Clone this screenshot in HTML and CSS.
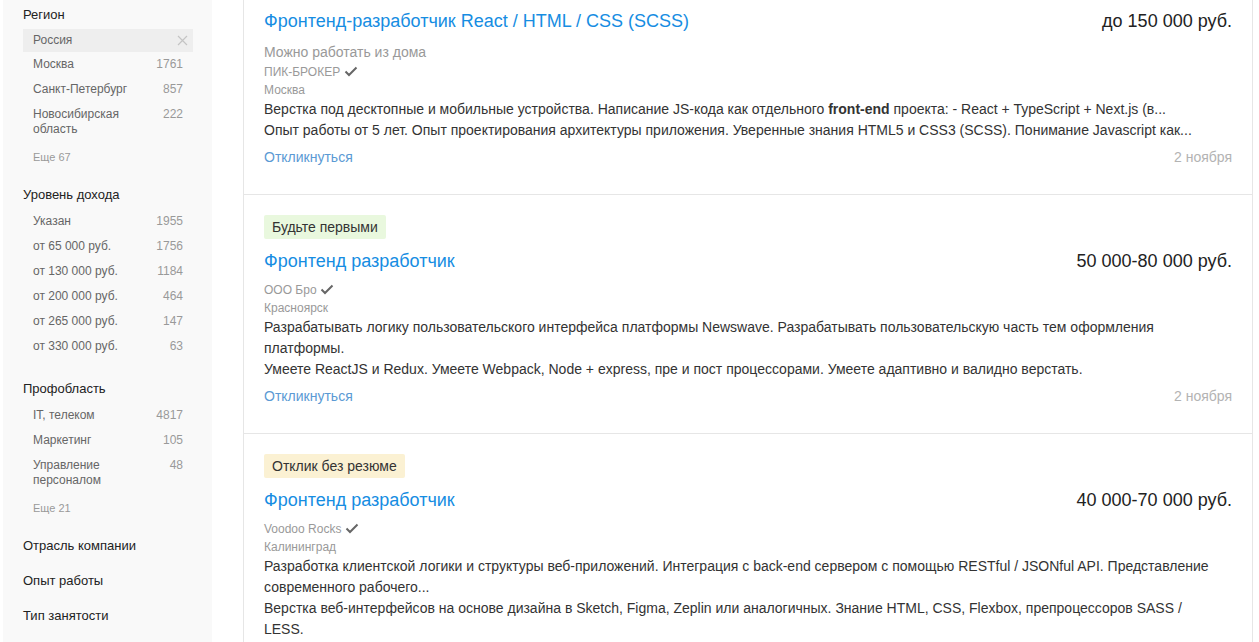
FILE: index.html
```html
<!DOCTYPE html>
<html lang="ru">
<head>
    <meta charset="UTF-8" />
    <meta name="viewport" content="width=device-width, initial-scale=1.0" />
    <title>Вакансии: фронтенд разработчик</title>
    <link rel="stylesheet" href="styles.css">
</head>
<body>
    <div class="page">
        <!-- Фильтры -->
        <aside class="filters">
            <div class="filter-group">
                <div class="filter-title">Регион</div>
                <div class="filter-item selected">
                    <span>Россия</span>
                    <svg class="clear" width="11" height="11" viewBox="0 0 11 11"><path d="M1 1L10 10M10 1L1 10" stroke="#c4c4c4" stroke-width="1.2" fill="none" /></svg>
                </div>
                <div class="filter-item"><span>Москва</span><span class="count">1761</span></div>
                <div class="filter-item"><span>Санкт-Петербург</span><span class="count">857</span></div>
                <div class="filter-item"><span>Новосибирская<br>область</span><span class="count">222</span></div>
                <a class="filter-more" href="#">Еще 67</a>
            </div>

            <div class="filter-group">
                <div class="filter-title">Уровень дохода</div>
                <div class="filter-item"><span>Указан</span><span class="count">1955</span></div>
                <div class="filter-item"><span>от 65 000 руб.</span><span class="count">1756</span></div>
                <div class="filter-item"><span>от 130 000 руб.</span><span class="count">1184</span></div>
                <div class="filter-item"><span>от 200 000 руб.</span><span class="count">464</span></div>
                <div class="filter-item"><span>от 265 000 руб.</span><span class="count">147</span></div>
                <div class="filter-item"><span>от 330 000 руб.</span><span class="count">63</span></div>
            </div>

            <div class="filter-group">
                <div class="filter-title">Профобласть</div>
                <div class="filter-item"><span>IT, телеком</span><span class="count">4817</span></div>
                <div class="filter-item"><span>Маркетинг</span><span class="count">105</span></div>
                <div class="filter-item"><span>Управление<br>персоналом</span><span class="count">48</span></div>
                <a class="filter-more" href="#">Еще 21</a>
            </div>

            <div class="filter-title collapsed">Отрасль компании</div>
            <div class="filter-title collapsed">Опыт работы</div>
            <div class="filter-title collapsed">Тип занятости</div>
        </aside>

        <!-- Список вакансий -->
        <main class="results">
            <div class="vacancy">
                <div class="vacancy-head">
                    <a class="vacancy-title" href="#">Фронтенд-разработчик React / HTML / CSS (SCSS)</a>
                    <div class="salary">до 150 000 руб.</div>
                </div>
                <div class="remote">Можно работать из дома</div>
                <div class="company">ПИК-БРОКЕР <svg class="check" width="14" height="11" viewBox="0 0 14 11"><path d="M1.5 5.5L5 9L12.5 1.5" stroke="#666" stroke-width="2" fill="none" /></svg></div>
                <div class="city">Москва</div>
                <div class="desc">
                    <p>Верстка под десктопные и мобильные устройства. Написание JS-кода как отдельного <b>front-end</b> проекта: - React + TypeScript + Next.js (в...</p>
                    <p>Опыт работы от 5 лет. Опыт проектирования архитектуры приложения. Уверенные знания HTML5 и CSS3 (SCSS). Понимание Javascript как...</p>
                </div>
                <div class="vacancy-foot">
                    <a class="respond" href="#">Откликнуться</a>
                    <span class="date">2 ноября</span>
                </div>
            </div>

            <div class="vacancy">
                <span class="badge badge-first">Будьте первыми</span>
                <div class="vacancy-head">
                    <a class="vacancy-title" href="#">Фронтенд разработчик</a>
                    <div class="salary">50 000-80 000 руб.</div>
                </div>
                <div class="company">ООО Бро <svg class="check" width="14" height="11" viewBox="0 0 14 11"><path d="M1.5 5.5L5 9L12.5 1.5" stroke="#666" stroke-width="2" fill="none" /></svg></div>
                <div class="city">Красноярск</div>
                <div class="desc">
                    <p>Разрабатывать логику пользовательского интерфейса платформы Newswave. Разрабатывать пользовательскую часть тем оформления платформы.</p>
                    <p>Умеете ReactJS и Redux. Умеете Webpack, Node + express, пре и пост процессорами. Умеете адаптивно и валидно верстать.</p>
                </div>
                <div class="vacancy-foot">
                    <a class="respond" href="#">Откликнуться</a>
                    <span class="date">2 ноября</span>
                </div>
            </div>

            <div class="vacancy">
                <span class="badge badge-noresume">Отклик без резюме</span>
                <div class="vacancy-head">
                    <a class="vacancy-title" href="#">Фронтенд разработчик</a>
                    <div class="salary">40 000-70 000 руб.</div>
                </div>
                <div class="company">Voodoo Rocks <svg class="check" width="14" height="11" viewBox="0 0 14 11"><path d="M1.5 5.5L5 9L12.5 1.5" stroke="#666" stroke-width="2" fill="none" /></svg></div>
                <div class="city">Калининград</div>
                <div class="desc">
                    <p>Разработка клиентской логики и структуры веб-приложений. Интеграция с back-end сервером с помощью RESTful / JSONful API. Представление современного рабочего...</p>
                    <p>Верстка веб-интерфейсов на основе дизайна в Sketch, Figma, Zeplin или аналогичных. Знание HTML, CSS, Flexbox, препроцессоров SASS / LESS.</p>
                </div>
                <div class="vacancy-foot">
                    <a class="respond" href="#">Откликнуться</a>
                    <span class="date">2 ноября</span>
                </div>
            </div>
        </main>
    </div>
</body>
</html>
```

FILE: styles.css
```css
*, *::before, *::after {
    box-sizing: border-box;
    margin: 0;
    padding: 0;
}

html, body {
    height: 100%;
    overflow: hidden;
}

body {
    background: #FFFFFF;
    font-family: 'Liberation Sans', Arial, sans-serif;
    color: #333333;
}

a {
    text-decoration: none;
}

.page {
    display: flex;
    align-items: stretch;
    min-height: 100%;
    padding-left: 3px;
}

/* 左側篩選欄 */
.filters {
    flex: 0 0 209px;
    background: #F9F9F9;
    padding: 5px 19px 0 20px;
}

.filter-group {
    margin-bottom: 20px;
}

.filter-title {
    font-size: 13px;
    line-height: 20px;
    color: #222222;
    margin-bottom: 4px;
}

    .filter-title.collapsed {
        margin-bottom: 15px;
    }

.filter-item {
    display: flex;
    justify-content: space-between;
    align-items: flex-start;
    padding: 5px 10px;
    font-size: 12px;
    line-height: 15px;
    color: #666666;
}

    .filter-item.selected {
        background: #EEEEEE;
        align-items: center;
        padding: 4px 10px;
    }

    .filter-item .count {
        color: #999999;
    }

    .filter-item .clear {
        margin-right: -5px;
    }

.filter-more {
    display: block;
    padding: 7px 10px 0;
    font-size: 11px;
    line-height: 16px;
    color: #999999;
}

/* 職缺列表 */
.results {
    flex: 0 0 1010px;
    margin-left: 31px;
    margin-top: -11px;
}

.vacancy {
    border: 1px solid #E6E6E6;
    border-top: none;
    padding: 20px 20px 27px;
    background: #FFFFFF;
}

.badge {
    display: inline-block;
    font-size: 14px;
    line-height: 24px;
    padding: 0 8px;
    color: #333333;
    border-radius: 2px;
    margin-bottom: 10px;
}

.badge-first {
    background: #E9F8DE;
}

.badge-noresume {
    background: #FBF1D3;
}

.vacancy-head {
    display: flex;
    justify-content: space-between;
    align-items: baseline;
    line-height: 24px;
    margin-bottom: 8px;
}

.vacancy-title {
    font-size: 18px;
    color: #168DE2;
}

.salary {
    font-size: 18px;
    color: #222222;
}

.remote {
    font-size: 14px;
    line-height: 22px;
    color: #999999;
    margin-top: 1px;
}

.company,
.city {
    font-size: 12px;
    line-height: 18px;
    color: #999999;
}

    .company .check {
        vertical-align: -1px;
    }

.desc {
    max-width: 955px;
    font-size: 14px;
    line-height: 21px;
    color: #333333;
}

.vacancy-foot {
    display: flex;
    justify-content: space-between;
    margin-top: 6px;
    font-size: 14px;
    line-height: 20px;
}

.respond {
    color: #5B9AD4;
}

.date {
    color: #B3B3B3;
}
```
